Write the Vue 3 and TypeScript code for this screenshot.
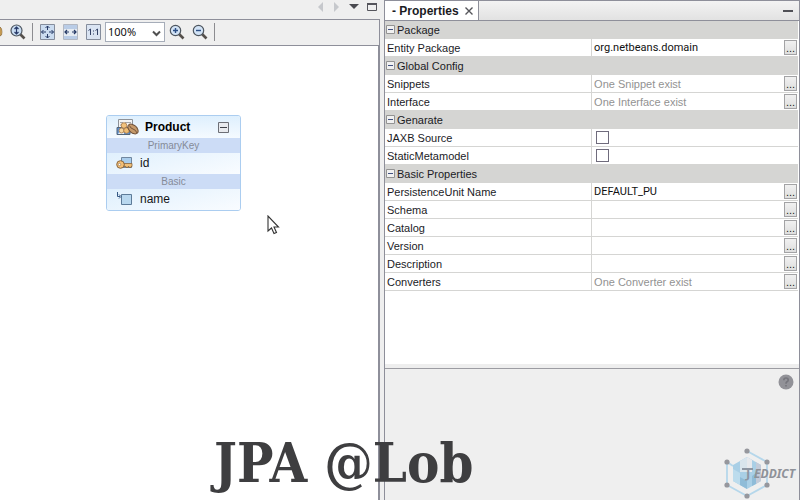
<script setup lang="ts">
import { ref } from 'vue'

type Kind = 'text' | 'hint' | 'check'

interface Property {
  id: string
  label: string
  kind: Kind
  value: string
}

interface Group {
  title: string
  items: Property[]
}

const zoom = ref('100%')

const groups = ref<Group[]>([
  {
    title: 'Package',
    items: [{ id: 'entity-package', label: 'Entity Package', kind: 'text', value: 'org.netbeans.domain' }],
  },
  {
    title: 'Global Config',
    items: [
      { id: 'snippets', label: 'Snippets', kind: 'hint', value: 'One Snippet exist' },
      { id: 'interface', label: 'Interface', kind: 'hint', value: 'One Interface exist' },
    ],
  },
  {
    title: 'Genarate',
    items: [
      { id: 'jaxb', label: 'JAXB Source', kind: 'check', value: '' },
      { id: 'metamodel', label: 'StaticMetamodel', kind: 'check', value: '' },
    ],
  },
  {
    title: 'Basic Properties',
    items: [
      { id: 'pu-name', label: 'PersistenceUnit Name', kind: 'text', value: 'DEFAULT_PU' },
      { id: 'schema', label: 'Schema', kind: 'text', value: '' },
      { id: 'catalog', label: 'Catalog', kind: 'text', value: '' },
      { id: 'version', label: 'Version', kind: 'text', value: '' },
      { id: 'description', label: 'Description', kind: 'text', value: '' },
      { id: 'converters', label: 'Converters', kind: 'hint', value: 'One Converter exist' },
    ],
  },
])
</script>

<template>
  <div class="ide">
    <section class="editor">
      <div class="window-bar">
        <button class="icon-btn" aria-label="Previous">
          <svg width="8" height="12" viewBox="0 0 8 12"><path d="M6 2v10L1 7z" fill="#c6c8cc" /></svg>
        </button>
        <button class="icon-btn" aria-label="Next">
          <svg width="8" height="12" viewBox="0 0 8 12"><path d="M1 2v10l5-5z" fill="#c6c8cc" /></svg>
        </button>
        <button class="icon-btn" aria-label="Documents">
          <svg width="10" height="12" viewBox="0 0 10 12"><path d="M0 4h10L5 9z" fill="#4a4a50" /></svg>
        </button>
        <button class="icon-btn" aria-label="Maximize">
          <svg width="10" height="12" viewBox="0 0 10 12"><path d="M.5 4v6.500h9V4" fill="none" stroke="#55555c" /><path d="M0 3h10v2H0z" fill="#55555c" /></svg>
        </button>
      </div>

      <div class="toolbar">
        <svg class="clipped" width="3" height="16" viewBox="0 0 3 16"><path d="M0 3q2 1 2 5t-2 4z" fill="#e5b45d" stroke="#765a38" stroke-width=".6" /></svg>
        <button class="tool" aria-label="Fit height">
          <svg width="16" height="16" viewBox="0 0 16 16">
            <path d="M10 10l4.500 4.500" stroke="#55504c" stroke-width="2.600" />
            <circle cx="6.500" cy="6.500" r="5.500" fill="#c8dcf2" stroke="#4e565f" stroke-width="1.200" />
            <path d="M6.500 3v7M4.500 5l2-2 2 2M4.500 8l2 2 2-2" fill="none" stroke="#283a68" stroke-width="1.200" />
          </svg>
        </button>
        <span class="divider"></span>
        <button class="tool wide" aria-label="Fit diagram">
          <svg width="15" height="16" viewBox="0 0 15 16">
            <path d="M.5.500h14v15H.5z" fill="#cbdcf0" stroke="#858d9c" />
            <path d="M7.500 2v4M7.500 10v4M1.500 8H6M9 8h4.500M5.500 4l2-2 2 2M5.500 12l2 2 2-2M3.500 6l-2 2 2 2M11.500 6l2 2-2 2" fill="none" stroke="#263a66" />
          </svg>
        </button>
        <button class="tool wide" aria-label="Fit width">
          <svg width="15" height="16" viewBox="0 0 15 16">
            <path d="M.5.500h14v15H.5z" fill="#e5ebf2" stroke="#b3b8c2" />
            <path d="M1 1h13v4H1zM1 12h13v3H1z" fill="#b9cce6" />
            <path d="M2 8h4M9 8h4M4 6L2 8l2 2M11 6l2 2-2 2" fill="none" stroke="#263a66" stroke-width="1.200" />
          </svg>
        </button>
        <button class="tool wide" aria-label="Actual size">
          <svg width="15" height="16" viewBox="0 0 15 16">
            <path d="M.5.500h14v15H.5z" fill="#dae4f2" stroke="#858d9c" />
            <path d="M2.500 6.500l2-1.500v6M9.500 6.500l2-1.500v6" fill="none" stroke="#334266" />
            <path d="M7 6.500h1v1H7zM7 9.500h1v1H7z" fill="#334266" />
          </svg>
        </button>
        <div class="zoom-box">
          <select v-model="zoom" aria-label="Zoom">
            <option>50%</option>
            <option>100%</option>
            <option>200%</option>
          </select>
          <svg class="chevron" width="9" height="7" viewBox="0 0 9 7"><path d="M1 1.500l3.500 3.500L8 1.500" fill="none" stroke="#505050" stroke-width="2" /></svg>
        </div>
        <button class="tool" aria-label="Zoom in">
          <svg width="16" height="16" viewBox="0 0 16 16">
            <path d="M10 10l4.500 4.500" stroke="#55504c" stroke-width="2.600" />
            <circle cx="6.500" cy="6.500" r="5.200" fill="#d2e3f6" stroke="#4e565f" stroke-width="1.200" />
            <path d="M6.500 4v5M4 6.500h5" stroke="#2c4f86" stroke-width="1.400" />
          </svg>
        </button>
        <button class="tool" aria-label="Zoom out">
          <svg width="16" height="16" viewBox="0 0 16 16">
            <path d="M10 10l4.500 4.500" stroke="#55504c" stroke-width="2.600" />
            <circle cx="6.500" cy="6.500" r="5.200" fill="#d2e3f6" stroke="#4e565f" stroke-width="1.200" />
            <path d="M4 6.500h5" stroke="#2c4f86" stroke-width="1.400" />
          </svg>
        </button>
        <span class="divider"></span>
      </div>

      <div class="canvas">
        <article class="entity">
          <header class="entity-head">
            <svg width="23" height="17" viewBox="0 0 23 17">
              <path d="M2.500.500h14v12h-14z" fill="#f4f4f4" stroke="#8e9298" />
              <path d="M4 3.500h3M9 3.500h6M4 6h2" stroke="#a4a6aa" />
              <path d="M1 8.500h13v7H1z" fill="#5e93d5" stroke="#536579" />
              <path d="M2 15l3-5 3 3v2z" fill="#e8f0f8" />
              <circle cx="8" cy="6.500" r="2.800" fill="#f2c27d" stroke="#a57646" stroke-width=".8" />
              <circle cx="5.500" cy="11.500" r="2.500" fill="#f6d49e" stroke="#a57646" stroke-width=".8" />
              <circle cx="10.500" cy="11.500" r="2.800" fill="#efbd75" stroke="#a57646" stroke-width=".8" />
              <ellipse cx="17" cy="10" rx="6" ry="3.800" transform="rotate(42 17 10)" fill="#c69a6b" stroke="#6f5139" />
              <path d="M13.500 6.500q1 3 3.500 3.500t4 4" fill="none" stroke="#76543a" />
            </svg>
            <h2>Product</h2>
            <button class="collapse" aria-label="Collapse Product">
              <svg width="11" height="11" viewBox="0 0 11 11"><path d="M.5.500h10v10H.5z" fill="#e8eaee" stroke="#6d6f76" /><path d="M2 5.500h7" stroke="#3f4148" /></svg>
            </button>
          </header>
          <div class="band">PrimaryKey</div>
          <div class="attribute">
            <svg width="17" height="14" viewBox="0 0 17 14">
              <path d="M5.500 1.500h10v10h-10z" fill="#a9cdec" stroke="#70879f" />
              <path d="M8 7.500h8v3h-1v1h-2v-1h-1v1h-2v-1H8z" fill="#f0c078" stroke="#89653d" stroke-width=".8" />
              <circle cx="4.500" cy="8.500" r="3.800" fill="#f3bf75" stroke="#89653d" />
              <circle cx="3.500" cy="8.500" r="1.200" fill="#fff" stroke="#89653d" stroke-width=".6" />
            </svg>
            <span>id</span>
          </div>
          <div class="band">Basic</div>
          <div class="attribute">
            <svg width="17" height="14" viewBox="0 0 17 14">
              <path d="M5.500 2.500h10v10h-10z" fill="#b9d8ef" stroke="#5d7b98" />
              <path d="M1.500 0v4.500H4M3 2.500l2 2-2 2" fill="none" stroke="#345783" />
            </svg>
            <span>name</span>
          </div>
        </article>
        <svg class="cursor" width="13" height="20" viewBox="0 0 13 20">
          <path d="M1 1v15l3.500-3 2.500 5.500 2.500-1L7 12h4.500z" fill="#fff" stroke="#333" stroke-width="1.100" />
        </svg>
      </div>
    </section>

    <section class="properties">
      <header class="tabs">
        <div class="tab">
          <span>- Properties</span>
          <button class="icon-btn" aria-label="Close tab">
            <svg width="8" height="8" viewBox="0 0 8 8"><path d="M.5.500l7 7M7.500.500l-7 7" stroke="#55555a" stroke-width="1.400" /></svg>
          </button>
        </div>
        <button class="icon-btn minimize" aria-label="Minimize">
          <svg width="10" height="2" viewBox="0 0 10 2"><path d="M0 0h10v2H0z" fill="#505056" /></svg>
        </button>
      </header>

      <div class="sheet">
        <table>
          <colgroup><col class="name-col" /><col /></colgroup>
          <tbody v-for="group in groups" :key="group.title">
            <tr class="group">
              <th colspan="2">
                <div class="cell">
                  <button class="toggle" :aria-label="`Collapse ${group.title}`">
                    <svg width="9" height="9" viewBox="0 0 9 9"><path d="M.5.500h8v8h-8z" fill="#f1f1f1" stroke="#939393" /><path d="M2 4.500h5" stroke="#405080" /></svg>
                  </button>
                  {{ group.title }}
                </div>
              </th>
            </tr>
            <tr v-for="item in group.items" :key="item.id">
              <td><label class="cell" :for="item.id">{{ item.label }}</label></td>
              <td>
                <div class="cell value">
                  <input v-if="item.kind === 'check'" :id="item.id" type="checkbox" />
                  <input v-else :id="item.id" v-model="item.value" type="text" :class="item.kind" :readonly="item.kind === 'hint'" />
                  <button v-if="item.kind !== 'check'" class="more" :aria-label="`Edit ${item.label}`">...</button>
                </div>
              </td>
            </tr>
          </tbody>
        </table>
      </div>

      <div class="splitter"></div>
      <footer class="help">
        <button class="icon-btn" aria-label="Help">
          <svg width="16" height="16" viewBox="0 0 16 16">
            <circle cx="8" cy="8" r="7.500" fill="#929298" />
            <path d="M5.800 6.200q0-2.200 2.200-2.200t2.200 1.900q0 1.200-1.200 1.900Q8 8.400 8 9.800M8 11v1.600" fill="none" stroke="#75757c" stroke-width="1.600" />
          </svg>
        </button>
      </footer>
    </section>

    <p class="caption">JPA @Lob</p>

    <svg class="logo" width="76" height="52" viewBox="0 0 76 52">
      <path d="M23 3l20 11v23L23 48 3 37V14l6 4" fill="none" stroke="#b5d7eb" stroke-width="1.800" />
      <path d="M23 9l14 8v16l-14 8-14-8V17z" fill="#a9cfe6" />
      <path d="M23 9l14 8v16l-5 3V14z" fill="#c3cbd9" />
      <path d="M16 13l7-4v15h-7z" fill="#d9e5ed" />
      <path d="M23 9l5 3v12h-5z" fill="#e7e9ed" />
      <path d="M9 21l7 4v12l-7-4z" fill="#bcdced" />
      <path d="M16 29l7 4v8l-7-4zM28 28l4-3v11l-4 2z" fill="#8fbcd8" />
      <g fill="#96979d">
        <circle cx="23" cy="3" r="2.600" /><circle cx="43" cy="14" r="2.600" /><circle cx="43" cy="37" r="2.600" />
        <circle cx="23" cy="48" r="2.600" /><circle cx="3" cy="37" r="2.600" /><circle cx="3" cy="14" r="2.600" />
      </g>
      <text x="22" y="30" class="logo-initial">J</text>
      <path d="M18 21h11" stroke="#8d96a3" stroke-width="2" />
      <text x="30" y="30" class="logo-text">EDDICT</text>
    </svg>
  </div>
</template>

<style>
body {
  margin: 0;
}
</style>

<style scoped>
.ide {
  position: relative;
  display: grid;
  grid-template-columns: minmax(0, 380fr) minmax(0, 416fr);
  column-gap: 4px;
  min-height: 100vh;
  background: #efefef;
  color: #1b1b1f;
  font: 11px/16px "Liberation Sans", Arial, sans-serif;
  overflow: hidden;
}

button {
  margin: 0;
  padding: 0;
  border: 0;
  background: none;
  font: inherit;
  color: inherit;
}

svg {
  display: block;
  flex: none;
}

.editor,
.properties {
  display: flex;
  flex-direction: column;
}

.window-bar {
  display: flex;
  justify-content: flex-end;
  align-items: flex-start;
  gap: 8px;
  height: 19px;
  padding-right: 3px;
}

.toolbar {
  display: flex;
  align-items: center;
  height: 23px;
  padding-bottom: 2px;
  border: solid #8e8f9a;
  border-width: 1px 1px 1px 0;
}

.tool {
  margin-left: 7px;
}

.wide {
  margin-left: 8px;
}

.divider {
  width: 1px;
  height: 18px;
  margin-left: 6px;
  background: #8c8c90;
}

.divider + .tool {
  margin-left: 7px;
}

.zoom-box {
  position: relative;
  margin-left: 4px;
}

.zoom-box select {
  display: block;
  appearance: none;
  width: 60px;
  height: 20px;
  padding: 0 2px;
  border: 1px solid #a6adb9;
  border-radius: 0;
  background: #fff;
  color: #111;
  font: 11px "Noto Sans", sans-serif;
}

.zoom-box + .tool {
  margin-left: 4px;
}

.chevron {
  position: absolute;
  right: 4px;
  top: 8px;
  pointer-events: none;
}

.canvas {
  flex: 1;
  padding: 69px 0 0 106px;
  border-right: 2px solid #8e8f9a;
  background: #fff;
}

.entity {
  width: 133px;
  border: 1px solid #abcdf0;
  border-radius: 3px;
  background: #fff;
  overflow: hidden;
}

.entity-head {
  display: flex;
  align-items: center;
  height: 22px;
  padding: 0 11px 0 9px;
  background: linear-gradient(#deeffd, #f5faff);
}

.entity-head h2 {
  flex: 1;
  margin: 0 0 0 6px;
  color: #000;
  font: bold 12px/22px "Liberation Sans", Arial, sans-serif;
}

.band {
  height: 15px;
  background: #ccdcf6;
  color: #858b98;
  font-size: 10px;
  line-height: 16px;
  text-align: center;
}

.attribute {
  display: flex;
  align-items: center;
  gap: 7px;
  height: 20px;
  padding: 0 0 1px 9px;
  background: linear-gradient(165deg, #e0f0fd, #f9fcff);
  color: #151518;
  font-size: 12px;
}

.cursor {
  position: absolute;
  left: 267px;
  top: 215px;
}

.properties {
  border: solid #8e8f9a;
  border-width: 1px 1px 0;
}

.tabs {
  display: flex;
  align-items: center;
  justify-content: space-between;
  height: 19px;
  border-bottom: 1px solid #8e8f9a;
  background: linear-gradient(#f3f3f3, #e2e2e2);
}

.tab {
  display: flex;
  align-items: center;
  gap: 6px;
  height: 19px;
  padding: 0 5px 0 7px;
  border-right: 1px solid #8e8f9a;
  background: #fff;
  font-size: 12px;
  font-weight: bold;
}

.minimize {
  margin-right: 6px;
}

.sheet {
  flex: 0 0 343px;
  padding-right: 1px;
  background: #fff;
}

table {
  width: 100%;
  border-collapse: separate;
  border-spacing: 0;
  table-layout: fixed;
}

.name-col {
  width: 49.9%;
}

th,
td {
  padding: 0;
  border-bottom: 1px solid #d5d5d3;
  font-weight: normal;
  text-align: left;
}

td + td {
  border-left: 1px solid #d5d5d3;
}

.group th {
  background: #d5d5d3;
}

.cell {
  display: flex;
  align-items: center;
  height: 17px;
  padding-left: 2px;
}

.group .cell {
  gap: 2px;
  padding-left: 1px;
}

.value {
  justify-content: space-between;
  padding-right: 1px;
}

.value input[type="text"] {
  flex: 1;
  min-width: 0;
  height: 15px;
  padding: 0;
  border: 0;
  outline: 0;
  background: none;
  color: #111;
  font: 11px Roboto, sans-serif;
}

.value input.hint {
  color: #929292;
  font-family: "Liberation Sans", Arial, sans-serif;
}

.value input[type="checkbox"] {
  appearance: none;
  width: 13px;
  height: 13px;
  margin: 0 0 0 2px;
  border: 1px solid #6f6b7c;
  background: #fff;
}

.more {
  width: 13px;
  height: 15px;
  border: 1px solid #a3a3a5;
  background: linear-gradient(#f1f1f1, #dedede);
  line-height: 14px;
  text-align: center;
}

.splitter {
  height: 4px;
  background: #eee;
  border-bottom: 1px solid #9c9ca2;
}

.help {
  display: flex;
  flex: 1;
  justify-content: flex-end;
  align-items: flex-start;
  padding: 5px 5px 0 0;
}

.caption {
  position: absolute;
  left: 214px;
  bottom: 5px;
  margin: 0;
  color: #3e3e40;
  font: bold 54px/64px "DejaVu Serif Condensed", "DejaVu Serif", serif;
  white-space: nowrap;
}

.logo {
  position: absolute;
  right: 0;
  bottom: 0;
}

.logo-initial {
  fill: #8d96a3;
  font: bold 13px "Open Sans", sans-serif;
}

.logo-text {
  fill: #8f9299;
  font: italic bold 12px "Noto Sans", sans-serif;
}
</style>
